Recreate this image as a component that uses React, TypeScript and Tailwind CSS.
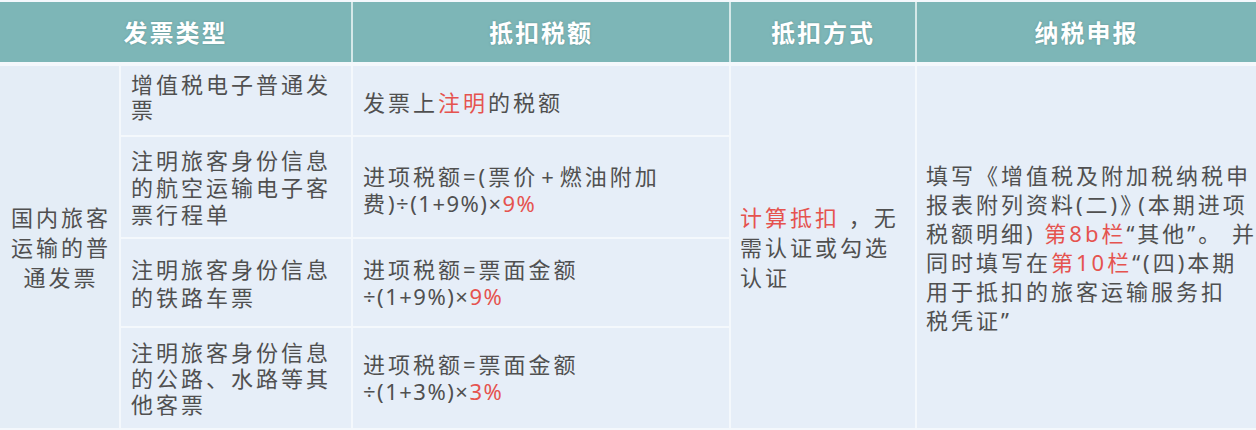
const Red = ({ children }: { children: React.ReactNode }) => (
    <span className="text-[#e5534f]">{children}</span>
);

// 公式里的拉丁字符间距略紧
const Num = ({ children }: { children: React.ReactNode }) => (
    <span className="tracking-[1.5px]">{children}</span>
);

const Cell = ({
    children,
    className = "",
}: {
    children: React.ReactNode;
    className?: string;
}) => (
    <div className={`bg-[#e6eef8] flex items-center pl-[10px] ${className}`}>
        <div>{children}</div>
    </div>
);

const rows = [
    {
        type: ["增值税电子普通发", "票"],
        lead: "leading-[25px]",
        amount: (
            <>
                发票上<Red>注明</Red>的税额
            </>
        ),
    },
    {
        type: ["注明旅客身份信息", "的航空运输电子客", "票行程单"],
        lead: "leading-[27px]",
        amount: (
            <>
                进项税额=(票价<span className="px-[3px]">+</span>燃油附加
                <br />
                费<Num>)÷(1+9%)×</Num>
                <Red>
                    <Num>9%</Num>
                </Red>
            </>
        ),
    },
    {
        type: ["注明旅客身份信息", "的铁路车票"],
        lead: "leading-[28px]",
        amount: (
            <>
                进项税额=票面金额
                <br />
                <Num>÷(1+9%)×</Num>
                <Red>
                    <Num>9%</Num>
                </Red>
            </>
        ),
    },
    {
        type: ["注明旅客身份信息", "的公路、水路等其", "他客票"],
        lead: "leading-[26px]",
        amount: (
            <>
                进项税额=票面金额
                <br />
                <Num>÷(1+3%)×</Num>
                <Red>
                    <Num>3%</Num>
                </Red>
            </>
        ),
    },
];

export default function App() {
    return (
        <div className="w-[1256px] h-[430px] bg-[#f4f8fc] pt-[2px] font-['Noto_Sans','Noto_Sans_CJK_SC',sans-serif] overflow-hidden">
            {/* 表头 */}
            <div className="flex gap-[2px] h-[60px] bg-[#d4e8e8] font-['Noto_Sans_CJK_SC',sans-serif]">
                {[
                    ["发票类型", "w-[351px]"],
                    ["抵扣税额", "w-[376px]"],
                    ["抵扣方式", "w-[184px]"],
                    ["纳税申报", "flex-1"],
                ].map(([title, w]) => (
                    <div
                        key={title}
                        className={`${w} bg-[#7db6b7] flex items-center justify-center text-white text-[24px] font-bold tracking-[2px] [text-shadow:0_0_2px_rgba(60,110,110,0.5)]`}
                    >
                        {title}
                    </div>
                ))}
            </div>

            {/* 表体 */}
            <div className="mt-[4px] grid grid-cols-[119px_230px_376px_184px_339px] grid-rows-[69px_100px_87px_100px] gap-[2px] text-[22px] tracking-[3px] text-[#505050]">
                <div className="row-span-4 bg-[#e4edf6] flex items-center justify-center text-center leading-[30px] pl-[3px]">
                    <div>
                        国内旅客
                        <br />
                        运输的普
                        <br />
                        通发票
                    </div>
                </div>

                {rows.map((r, i) => (
                    <div key={i} className="contents">
                        <Cell className={`${r.lead} ${i === 0 ? "pb-[8px]" : ""}`}>
                            {r.type.map((line) => (
                                <div key={line} className="whitespace-nowrap">
                                    {line}
                                </div>
                            ))}
                        </Cell>
                        <Cell className={`leading-[27px] whitespace-nowrap ${i === 1 ? "pt-[6px]" : ""} ${i === 0 ? "pt-[4px]" : ""}`}>
                            {r.amount}
                        </Cell>
                        {i === 0 && (
                            <>
                                <div className="row-span-4 col-start-4 row-start-1 bg-[#e6eef8] flex items-center pl-[9px] leading-[30px] whitespace-nowrap">
                                    <div>
                                        <Red>计算抵扣</Red> ，无
                                        <br />
                                        需认证或勾选
                                        <br />
                                        认证
                                    </div>
                                </div>
                                <div className="row-span-4 col-start-5 row-start-1 bg-[#e6eef8] flex items-center pl-[9px] pt-[2px] leading-[29px] whitespace-nowrap">
                                    <div>
                                        <div>填写《增值税及附加税纳税申</div>
                                        <div>
                                            报表附列资料(二)<span className="tracking-[-4px]">》</span>(本期进项
                                        </div>
                                        <div>
                                            税额明细) <Red>第8b栏</Red>“其他”。 并
                                        </div>
                                        <div>
                                            同时填写在<Red>第10栏</Red>“(四)本期
                                        </div>
                                        <div>用于抵扣的旅客运输服务扣</div>
                                        <div>税凭证”</div>
                                    </div>
                                </div>
                            </>
                        )}
                    </div>
                ))}
            </div>
        </div>
    );
}
